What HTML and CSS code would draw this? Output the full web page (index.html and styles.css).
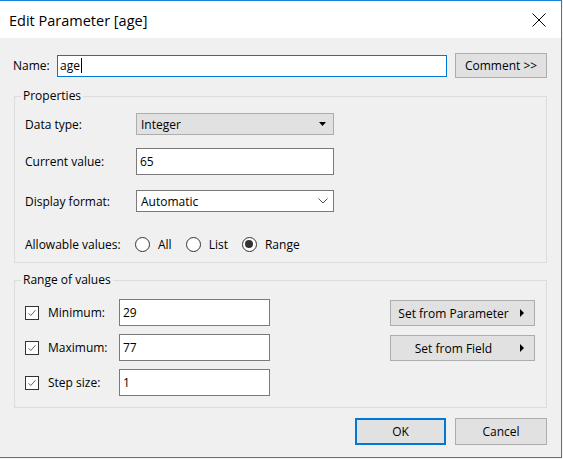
FILE: index.html
```html
<!DOCTYPE html>
<html>
<head>
<meta charset="utf-8">
<title>Edit Parameter [age]</title>
<link rel="stylesheet" href="styles.css">
</head>
<body>
<div class="window">
  <div class="titlebar">
    <span class="title">Edit Parameter [age]</span>
    <svg class="close" width="14" height="14" viewBox="0 0 14 14"><path d="M0.5 0.5L13.5 13.5M13.5 0.5L0.5 13.5" stroke="#000" stroke-width="1" fill="none"/></svg>
  </div>
  <div class="content">
    <div class="name-row">
      <span class="name-label">Name:</span>
      <div class="field name-field">age<span class="caret"></span></div>
      <div class="btn comment">Comment &gt;&gt;</div>
    </div>

    <fieldset class="group props">
      <legend>Properties</legend>
      <div class="prow r-type">
        <span class="plabel">Data type:</span>
        <div class="select select-gray">
          <span>Integer</span>
          <svg class="tri" width="7" height="4" viewBox="0 0 7 4"><path d="M0 0H7L3.5 4Z" fill="#000"/></svg>
        </div>
      </div>
      <div class="prow r-current">
        <span class="plabel">Current value:</span>
        <div class="field pfield">65</div>
      </div>
      <div class="prow r-format">
        <span class="plabel">Display format:</span>
        <div class="select select-white">
          <span>Automatic</span>
          <svg class="chev" width="10" height="6" viewBox="0 0 10 6"><path d="M0.5 0.5L5 5L9.5 0.5" stroke="#555" stroke-width="1" fill="none"/></svg>
        </div>
      </div>
      <div class="prow r-allow">
        <span class="plabel allow-label">Allowable values:</span>
        <div class="radios">
          <span class="radio-item"><span class="radio"></span>All</span>
          <span class="radio-item"><span class="radio"></span>List</span>
          <span class="radio-item"><span class="radio checked"></span>Range</span>
        </div>
      </div>
    </fieldset>

    <fieldset class="group range">
      <legend>Range of values</legend>
      <div class="range-body">
        <div class="range-left">
          <div class="rrow">
            <span class="check"><svg width="12" height="12" viewBox="0 0 12 12"><path d="M2.5 6.2L4.8 8.5L9.5 3.2" stroke="#666" stroke-width="1" fill="none"/></svg></span>
            <span class="rlabel">Minimum:</span>
            <div class="field rfield">29</div>
          </div>
          <div class="rrow">
            <span class="check"><svg width="12" height="12" viewBox="0 0 12 12"><path d="M2.5 6.2L4.8 8.5L9.5 3.2" stroke="#666" stroke-width="1" fill="none"/></svg></span>
            <span class="rlabel">Maximum:</span>
            <div class="field rfield">77</div>
          </div>
          <div class="rrow">
            <span class="check"><svg width="12" height="12" viewBox="0 0 12 12"><path d="M2.5 6.2L4.8 8.5L9.5 3.2" stroke="#666" stroke-width="1" fill="none"/></svg></span>
            <span class="rlabel">Step size:</span>
            <div class="field rfield">1</div>
          </div>
        </div>
        <div class="range-right">
          <div class="btn setbtn"><span class="settext">Set from Parameter</span><svg class="arrow" width="4" height="8" viewBox="0 0 4 8"><path d="M0 0L4 4L0 8Z" fill="#000"/></svg></div>
          <div class="btn setbtn"><span class="settext">Set from Field</span><svg class="arrow" width="4" height="8" viewBox="0 0 4 8"><path d="M0 0L4 4L0 8Z" fill="#000"/></svg></div>
        </div>
      </div>
    </fieldset>

    <div class="footer">
      <div class="btn ok">OK</div>
      <div class="btn cancel">Cancel</div>
    </div>
  </div>
</div>
</body>
</html>
```

FILE: styles.css
```css
* { box-sizing: border-box; }

html, body {
  margin: 0;
  padding: 0;
}

body {
  width: 563px;
  height: 459px;
  background: #f4f4f4;
  font-family: "Open Sans", "Noto Sans", "DejaVu Sans", sans-serif;
  font-size: 12px;
  color: #000;
  overflow: hidden;
}

.window {
  width: 562px;
  height: 458px;
  border-top: 1px solid #1883d7;
  border-right: 1px solid #1883d7;
  border-bottom: 1px solid #1883d7;
  background: #f0f0f0;
  display: flex;
  flex-direction: column;
}

.titlebar {
  height: 37px;
  background: #fff;
  display: flex;
  align-items: center;
  justify-content: space-between;
  padding: 0 15px 0 9px;
  flex: none;
}

.title {
  font-size: 14.5px;
  color: #000;
  margin-top: 1px;
}

.close { display: block; }

.content {
  padding: 15px 14px 0 13px;
  display: flex;
  flex-direction: column;
}

.name-row {
  display: flex;
  align-items: center;
  height: 25px;
}

.name-label {
  width: 44px;
  flex: none;
}

.field {
  background: #fff;
  border: 1px solid #7a7a7a;
  display: flex;
  align-items: center;
  padding-left: 2px;
  white-space: nowrap;
}

.name-field {
  width: 390px;
  height: 22px;
  border-color: #0078d7;
  margin-right: 8px;
}

.caret {
  display: inline-block;
  width: 1px;
  height: 15px;
  background: #000;
  margin-left: 1px;
}

.btn {
  background: #e1e1e1;
  border: 1px solid #adadad;
  display: flex;
  align-items: center;
  justify-content: center;
  white-space: nowrap;
}

.comment {
  width: 92px;
  height: 25px;
}

.group {
  border: 1px solid #dcdcdc;
  margin: 0;
  min-width: 0;
}

.group legend {
  padding: 0 2px;
  margin-left: -4px;
  line-height: 16px;
  font-size: 12px;
}

.props {
  margin: 10px 0 0 1px;
  padding: 9px 10px 8px 10px;
}

.prow {
  display: flex;
  align-items: center;
}

.plabel {
  width: 111px;
  flex: none;
}

.r-current { margin-top: 13px; }
.r-format { margin-top: 15px; }
.r-allow { margin-top: 22px; height: 20px; }

.select {
  width: 198px;
  height: 22px;
  display: flex;
  align-items: center;
  justify-content: space-between;
  padding: 0 6px 0 4px;
}

.select-gray {
  background: #e1e1e1;
  border: 1px solid #adadad;
}

.select-white {
  background: #fff;
  border: 1px solid #7a7a7a;
}

.tri { display: block; margin-right: 1px; }
.chev { display: block; margin-right: -1px; }

.pfield {
  width: 198px;
  height: 27px;
  padding-left: 3px;
}

.allow-label { width: 110px; }

.radios {
  display: flex;
  align-items: center;
}

.radio-item {
  display: flex;
  align-items: center;
  margin-right: 14px;
}

.radio {
  width: 15px;
  height: 15px;
  border: 1px solid #333;
  border-radius: 50%;
  background: #fff;
  margin-right: 8px;
  display: flex;
  align-items: center;
  justify-content: center;
}

.radio.checked::after {
  content: "";
  width: 8px;
  height: 8px;
  border-radius: 50%;
  background: #333;
}

.range {
  margin: 9px 0 0 1px;
  padding: 11px 11px 12px 10px;
}

.range-body {
  display: flex;
  justify-content: space-between;
}

.range-left {
  display: flex;
  flex-direction: column;
  gap: 9px;
}

.rrow {
  display: flex;
  align-items: center;
  height: 26px;
}

.check {
  width: 14px;
  height: 14px;
  border: 1px solid #333;
  background: #fff;
  display: flex;
  align-items: center;
  justify-content: center;
  margin-right: 9px;
  margin-top: 2px;
}

.check svg { display: block; }

.rlabel {
  width: 71px;
  flex: none;
}

.rfield {
  width: 151px;
  height: 27px;
  padding-left: 3px;
}

.range-right {
  display: flex;
  flex-direction: column;
  gap: 9px;
  padding-top: 1px;
}

.setbtn {
  width: 145px;
  height: 26px;
  position: relative;
  justify-content: flex-start;
  padding-right: 18px;
}

.settext {
  flex: 1;
  text-align: center;
}

.arrow {
  position: absolute;
  right: 10px;
  top: 8px;
}

.footer {
  display: flex;
  justify-content: flex-end;
  margin-top: 10px;
}

.ok {
  width: 91px;
  height: 27px;
  border: 2px solid #0078d7;
  margin-right: 9px;
}

.cancel {
  width: 92px;
  height: 27px;
}
```
